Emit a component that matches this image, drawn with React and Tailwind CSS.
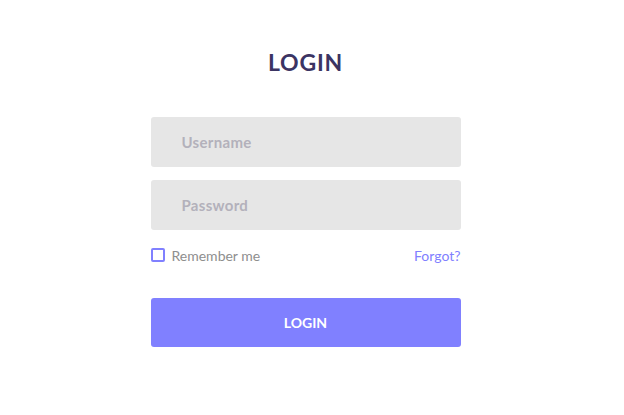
import React from "react";

export default function App() {
  return (
    <div
      className="w-[611px] h-[415px] bg-white flex flex-col items-center"
      style={{ fontFamily: 'Lato, "Open Sans", sans-serif' }}
    >
      <h1 className="mt-[47px] text-[23px] leading-[30px] font-bold text-[#3b3463] tracking-[0.8px]">
        LOGIN
      </h1>
      <form className="mt-[40px] w-[310px] flex flex-col">
        <input
          type="text"
          placeholder="Username"
          className="h-[50px] w-full rounded-[3px] bg-[#e6e6e6] pl-[31px] text-[15px] tracking-[0.3px] font-bold text-[#555] placeholder:text-[#b3b1bb] outline-none"
        />
        <input
          type="password"
          placeholder="Password"
          className="mt-[13px] h-[50px] w-full rounded-[3px] bg-[#e6e6e6] pl-[31px] text-[15px] tracking-[0.3px] font-bold text-[#555] placeholder:text-[#b3b1bb] outline-none"
        />
        <div className="mt-[16px] flex items-center justify-between h-[18px]">
          <label className="flex items-center gap-[7px] text-[14px] text-[#8e8e8e]">
            <span className="w-[14px] h-[14px] rounded-[2px] border-[2px] border-[#8080ff] bg-white" />
            Remember me
          </label>
          <a className="text-[14px] text-[#8080ff]">Forgot?</a>
        </div>
        <button
          type="button"
          className="mt-[34px] h-[49px] w-full rounded-[3px] bg-[#8080ff] text-white text-[14px] font-bold"
        >
          LOGIN
        </button>
      </form>
    </div>
  );
}
